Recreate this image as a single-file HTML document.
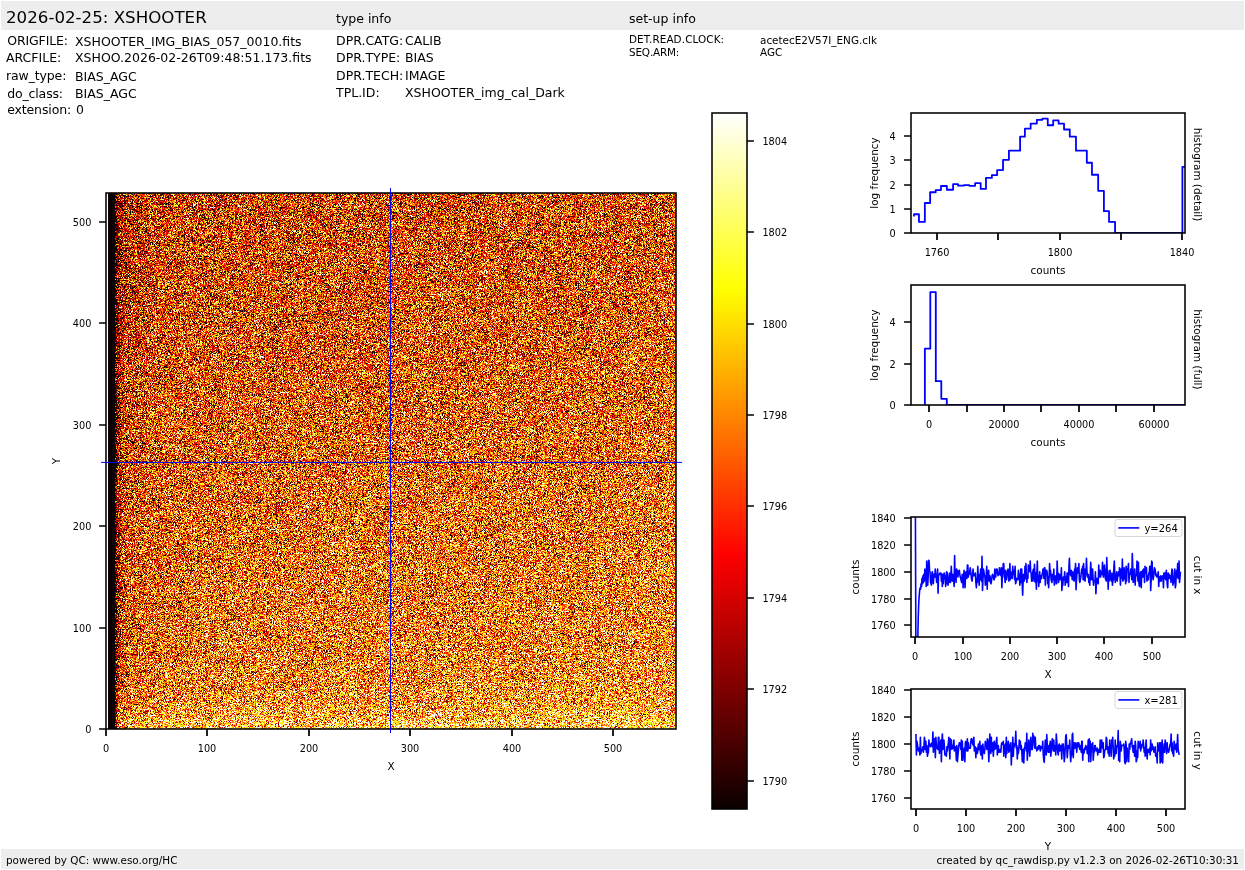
<!DOCTYPE html>
<html lang="en">
<head>
<meta charset="utf-8">
<title>2026-02-25: XSHOOTER</title>
<style>
html,body{margin:0;padding:0;background:#fff;}
body{width:1245px;height:870px;overflow:hidden;}
svg{display:block;font-family:"DejaVu Sans", "Liberation Sans", sans-serif;will-change:transform;}
text{white-space:pre;}
</style>
</head>
<body>
<svg width="1245" height="870" viewBox="0 0 1245 870">
<rect width="1245" height="870" fill="#fff"/>
<rect x="1" y="1" width="1243" height="29" fill="#ededed"/>
<rect x="1" y="849" width="1243" height="20" fill="#ededed"/>
<text x="6.00" y="23.00" font-size="16.67">2026-02-25: XSHOOTER</text>
<text x="336.00" y="23.00" font-size="12.50">type info</text>
<text x="629.00" y="23.00" font-size="12.50">set-up info</text>
<text x="7.20" y="45.00" font-size="12.50" textLength="60.85" lengthAdjust="spacing">ORIGFILE:</text>
<text x="75.00" y="46.00" font-size="12.50">XSHOOTER_IMG_BIAS_057_0010.fits</text>
<text x="6.00" y="62.00" font-size="12.50">ARCFILE:</text>
<text x="75.00" y="62.00" font-size="12.50">XSHOO.2026-02-26T09:48:51.173.fits</text>
<text x="6.00" y="80.00" font-size="12.50" textLength="60.41" lengthAdjust="spacing">raw_type:</text>
<text x="75.00" y="81.00" font-size="12.50">BIAS_AGC</text>
<text x="7.20" y="98.00" font-size="12.50" textLength="55.87" lengthAdjust="spacing">do_class:</text>
<text x="75.00" y="98.00" font-size="12.50">BIAS_AGC</text>
<text x="7.20" y="114.00" font-size="12.50" textLength="63.95" lengthAdjust="spacing">extension:</text>
<text x="76.10" y="114.00" font-size="12.50">0</text>
<text x="336.00" y="45.00" font-size="12.50">DPR.CATG:</text>
<text x="405.00" y="45.00" font-size="12.50">CALIB</text>
<text x="336.00" y="62.00" font-size="12.50">DPR.TYPE:</text>
<text x="405.00" y="62.00" font-size="12.50">BIAS</text>
<text x="336.00" y="80.00" font-size="12.50">DPR.TECH:</text>
<text x="405.00" y="80.00" font-size="12.50">IMAGE</text>
<text x="336.00" y="97.00" font-size="12.50">TPL.ID:</text>
<text x="405.00" y="97.00" font-size="12.50">XSHOOTER_img_cal_Dark</text>
<text x="629.00" y="43.00" font-size="10.42" textLength="95.14" lengthAdjust="spacing">DET.READ.CLOCK:</text>
<text x="760.00" y="44.00" font-size="10.42">acetecE2V57I_ENG.clk</text>
<text x="629.00" y="56.00" font-size="10.42" textLength="50.36" lengthAdjust="spacing">SEQ.ARM:</text>
<text x="760.00" y="56.00" font-size="10.42">AGC</text>
<text x="6.00" y="863.50" font-size="10.42">powered by QC: www.eso.org/HC</text>
<text x="1239.00" y="863.50" font-size="10.42" text-anchor="end">created by qc_rawdisp.py v1.2.3 on 2026-02-26T10:30:31</text>
<defs>
<clipPath id="ic"><rect x="106.0" y="193.0" width="570.0" height="536.0"/></clipPath>
<filter id="nz" filterUnits="userSpaceOnUse" x="6.0" y="93.0" width="770.0" height="736.0" color-interpolation-filters="sRGB">
<feTurbulence type="fractalNoise" baseFrequency="0.7" numOctaves="1" seed="3" result="t"/>
<feColorMatrix in="t" type="matrix" values="1 0 0 0 0 0 1 0 0 0 0 0 1 0 0 0 0 0 0 1" result="o"/>
<feDisplacementMap in="o" in2="o" scale="200" xChannelSelector="G" yChannelSelector="B" result="d"/>
<feColorMatrix in="d" type="matrix" values="1 0 0 0 0 1 0 0 0 0 1 0 0 0 0 0 0 0 0 1" result="g"/>
<feComposite in="g" in2="SourceGraphic" operator="arithmetic" k1="0" k2="1" k3="1" k4="-0.5" result="s"/>
<feComponentTransfer in="s">
<feFuncR type="discrete" tableValues=".042 .042 .042 .042 .042 .042 .042 .042 .042 .042 .042 .042 .042 .042 .042 .042 .042 .042 .042 .042 .042 .042 .042 .042 .042 .042 .042 .042 .042 .042 .042 .042 .042 .042 .042 .042 .042 .042 .042 .042 .042 .042 .042 .042 .042 .042 .042 .042 .042 .042 .042 .042 .042 .042 .042 .042 .042 .042 .042 .042 .042 .042 .042 .042 .042 .042 .042 .042 .042 .042 .042 .042 .042 .042 .042 .042 .042 .042 .042 .042 .042 .042 .147 .147 .147 .147 .147 .147 .147 .319 .319 .319 .319 .319 .319 .492 .492 .492 .492 .492 .492 .664 .664 .664 .664 .664 .664 .837 .837 .837 .837 .837 .837 1 1 1 1 1 1 1 1 1 1 1 1 1 1 1 1 1 1 1 1 1 1 1 1 1 1 1 1 1 1 1 1 1 1 1 1 1 1 1 1 1 1 1 1 1 1 1 1 1 1 1 1 1 1 1 1 1 1 1 1 1 1 1 1 1 1 1 1 1 1 1 1 1 1 1 1 1 1 1 1 1 1 1 1 1 1 1 1 1 1 1 1 1 1 1 1 1 1 1 1 1 1 1 1 1 1 1 1 1 1 1 1 1 1 1 1 1 1 1 1 1 1 1 1 1 1 1 1 1 1 1 1 1 1 1 1 1 1 1 1 1 1 1"/>
<feFuncG type="discrete" tableValues="0 0 0 0 0 0 0 0 0 0 0 0 0 0 0 0 0 0 0 0 0 0 0 0 0 0 0 0 0 0 0 0 0 0 0 0 0 0 0 0 0 0 0 0 0 0 0 0 0 0 0 0 0 0 0 0 0 0 0 0 0 0 0 0 0 0 0 0 0 0 0 0 0 0 0 0 0 0 0 0 0 0 0 0 0 0 0 0 0 0 0 0 0 0 0 0 0 0 0 0 0 0 0 0 0 0 0 0 0 0 0 0 0 .009 .009 .009 .009 .009 .009 .182 .182 .182 .182 .182 .182 .354 .354 .354 .354 .354 .354 .527 .527 .527 .527 .527 .527 .699 .699 .699 .699 .699 .699 .699 .872 .872 .872 .872 .872 .872 1 1 1 1 1 1 1 1 1 1 1 1 1 1 1 1 1 1 1 1 1 1 1 1 1 1 1 1 1 1 1 1 1 1 1 1 1 1 1 1 1 1 1 1 1 1 1 1 1 1 1 1 1 1 1 1 1 1 1 1 1 1 1 1 1 1 1 1 1 1 1 1 1 1 1 1 1 1 1 1 1 1 1 1 1 1 1 1 1 1 1 1 1 1 1 1 1 1 1 1 1 1 1 1 1 1"/>
<feFuncB type="discrete" tableValues="0 0 0 0 0 0 0 0 0 0 0 0 0 0 0 0 0 0 0 0 0 0 0 0 0 0 0 0 0 0 0 0 0 0 0 0 0 0 0 0 0 0 0 0 0 0 0 0 0 0 0 0 0 0 0 0 0 0 0 0 0 0 0 0 0 0 0 0 0 0 0 0 0 0 0 0 0 0 0 0 0 0 0 0 0 0 0 0 0 0 0 0 0 0 0 0 0 0 0 0 0 0 0 0 0 0 0 0 0 0 0 0 0 0 0 0 0 0 0 0 0 0 0 0 0 0 0 0 0 0 0 0 0 0 0 0 0 0 0 0 0 0 0 0 0 0 0 0 0 0 .066 .066 .066 .066 .066 .066 .325 .325 .325 .325 .325 .325 .583 .583 .583 .583 .583 .583 .842 .842 .842 .842 .842 .842 1 1 1 1 1 1 1 1 1 1 1 1 1 1 1 1 1 1 1 1 1 1 1 1 1 1 1 1 1 1 1 1 1 1 1 1 1 1 1 1 1 1 1 1 1 1 1 1 1 1 1 1 1 1 1 1 1 1 1 1 1 1 1 1 1 1 1 1 1 1 1 1 1 1 1 1 1 1 1 1 1 1"/>
<feFuncA type="linear" slope="0" intercept="1"/>
</feComponentTransfer>
</filter>
<linearGradient id="gp" gradientUnits="userSpaceOnUse" x1="289.1" y1="53.8" x2="492.9" y2="868.7">
<stop offset="0" stop-color="#737373"/><stop offset="1" stop-color="#8c8c8c"/>
</linearGradient>
<linearGradient id="gv" x1="0" y1="0" x2="0" y2="1">
<stop offset="0.0000" stop-color="#fff" stop-opacity="0.000"/>
<stop offset="0.8134" stop-color="#fff" stop-opacity="0.000"/>
<stop offset="0.8507" stop-color="#fff" stop-opacity="0.002"/>
<stop offset="0.8881" stop-color="#fff" stop-opacity="0.005"/>
<stop offset="0.9160" stop-color="#fff" stop-opacity="0.013"/>
<stop offset="0.9347" stop-color="#fff" stop-opacity="0.022"/>
<stop offset="0.9496" stop-color="#fff" stop-opacity="0.034"/>
<stop offset="0.9627" stop-color="#fff" stop-opacity="0.051"/>
<stop offset="0.9720" stop-color="#fff" stop-opacity="0.067"/>
<stop offset="0.9813" stop-color="#fff" stop-opacity="0.088"/>
<stop offset="0.9888" stop-color="#fff" stop-opacity="0.110"/>
<stop offset="0.9944" stop-color="#fff" stop-opacity="0.130"/>
<stop offset="1.0000" stop-color="#fff" stop-opacity="0.154"/>
</linearGradient>
<linearGradient id="gh" x1="0" y1="0" x2="1" y2="0">
<stop offset="0.0000" stop-color="#000" stop-opacity="1.000"/>
<stop offset="0.0147" stop-color="#000" stop-opacity="1.000"/>
<stop offset="0.0154" stop-color="#000" stop-opacity="0.432"/>
<stop offset="0.0175" stop-color="#000" stop-opacity="0.288"/>
<stop offset="0.0211" stop-color="#000" stop-opacity="0.168"/>
<stop offset="0.0263" stop-color="#000" stop-opacity="0.096"/>
<stop offset="0.0351" stop-color="#000" stop-opacity="0.048"/>
<stop offset="0.0702" stop-color="#000" stop-opacity="0.019"/>
<stop offset="0.1579" stop-color="#000" stop-opacity="0.000"/>
<stop offset="1.0000" stop-color="#000" stop-opacity="0.000"/>
</linearGradient>
<linearGradient id="cb" x1="0" y1="1" x2="0" y2="0">
<stop offset="0.00000" stop-color="rgb(11,0,0)"/>
<stop offset="0.36508" stop-color="rgb(255,0,0)"/>
<stop offset="0.74603" stop-color="rgb(255,255,0)"/>
<stop offset="1.00000" stop-color="rgb(255,255,255)"/>
</linearGradient>
</defs>
<g clip-path="url(#ic)"><g filter="url(#nz)"><rect x="106.0" y="193.0" width="570.0" height="536.0" fill="url(#gp)"/><rect x="106.0" y="193.0" width="570.0" height="536.0" fill="url(#gv)"/><rect x="106.0" y="193.0" width="570.0" height="536.0" fill="url(#gh)"/></g></g>
<rect x="106.0" y="193.0" width="2.15" height="536.0" fill="#fff"/>
<rect x="108.15" y="193.0" width="6.2" height="536.0" fill="#0b0000"/>
<rect x="106.00" y="193.00" width="570.00" height="536.00" fill="none" stroke="#000" stroke-width="1.55" stroke-linejoin="miter"/>
<path d="M106.00 729.00v6.94M207.00 729.00v6.94M309.00 729.00v6.94M410.00 729.00v6.94M512.00 729.00v6.94M613.00 729.00v6.94" stroke="#000" stroke-width="1.74" fill="none"/>
<text x="106.00" y="751.58" font-size="9.72" text-anchor="middle">0</text>
<text x="207.00" y="751.58" font-size="9.72" text-anchor="middle">100</text>
<text x="309.00" y="751.58" font-size="9.72" text-anchor="middle">200</text>
<text x="410.00" y="751.58" font-size="9.72" text-anchor="middle">300</text>
<text x="512.00" y="751.58" font-size="9.72" text-anchor="middle">400</text>
<text x="613.00" y="751.58" font-size="9.72" text-anchor="middle">500</text>
<path d="M106.00 729.00h-6.94M106.00 628.00h-6.94M106.00 526.00h-6.94M106.00 425.00h-6.94M106.00 323.00h-6.94M106.00 222.00h-6.94" stroke="#000" stroke-width="1.74" fill="none"/>
<text x="91.42" y="733.00" font-size="9.72" text-anchor="end">0</text>
<text x="91.42" y="632.00" font-size="9.72" text-anchor="end">100</text>
<text x="91.42" y="530.00" font-size="9.72" text-anchor="end">200</text>
<text x="91.42" y="429.00" font-size="9.72" text-anchor="end">300</text>
<text x="91.42" y="327.00" font-size="9.72" text-anchor="end">400</text>
<text x="91.42" y="226.00" font-size="9.72" text-anchor="end">500</text>
<text x="391.00" y="769.90" font-size="10.42" text-anchor="middle">X</text>
<text x="59.70" y="461.00" font-size="10.42" text-anchor="middle" transform="rotate(-90 59.70 461.00)">Y</text>
<path d="M101 462.4H682M390.5 188V733" stroke="#0000ff" stroke-width="1" fill="none"/>
<rect x="712.0" y="113.0" width="35.00" height="696.00" fill="url(#cb)"/>
<rect x="712.00" y="113.00" width="35.00" height="696.00" fill="none" stroke="#000" stroke-width="1.55" stroke-linejoin="miter"/>
<path d="M747.00 781.00h6.94M747.00 689.00h6.94M747.00 598.00h6.94M747.00 506.00h6.94M747.00 415.00h6.94M747.00 324.00h6.94M747.00 232.00h6.94M747.00 141.00h6.94" stroke="#000" stroke-width="1.74" fill="none"/>
<text x="762.38" y="785.00" font-size="9.72">1790</text>
<text x="762.38" y="693.00" font-size="9.72">1792</text>
<text x="762.38" y="602.00" font-size="9.72">1794</text>
<text x="762.38" y="510.00" font-size="9.72">1796</text>
<text x="762.38" y="419.00" font-size="9.72">1798</text>
<text x="762.38" y="328.00" font-size="9.72">1800</text>
<text x="762.38" y="236.00" font-size="9.72">1802</text>
<text x="762.38" y="145.00" font-size="9.72">1804</text>
<clipPath id="c1"><rect x="911.0" y="113.0" width="274.00" height="120.00"/></clipPath>
<path d="M914.00 216.61V214.26H918.96V221.91H924.85V203.02H930.13V192.25H935.71V190.06H940.99V186.01H946.88V189.75H953.08V184.13H958.05V185.69H963.94V185.07H969.37V185.85H975.11V183.04H980.69V188.97H985.97V177.89H991.86V175.08H997.14V170.08H1003.03V159.78H1008.92V150.72H1020.09V136.67H1024.90V128.71H1030.64V123.71H1036.84V119.81H1042.27V118.71H1047.76V125.27H1053.18V120.43H1058.61V123.71H1064.04V129.49H1069.78V136.67H1075.99V150.72H1086.84V162.74H1091.96V174.76H1098.17V190.85H1103.91V211.14H1109.02V221.91H1115.07V233.00H1182.39V166.96H1185.80" stroke="#0000ff" stroke-width="1.8" fill="none" stroke-linejoin="round" clip-path="url(#c1)"/>
<rect x="911.00" y="113.00" width="274.00" height="120.00" fill="none" stroke="#000" stroke-width="1.55" stroke-linejoin="miter"/>
<path d="M937.00 233.00v6.94M998.00 233.00v6.94M1060.00 233.00v6.94M1121.00 233.00v6.94M1182.00 233.00v6.94" stroke="#000" stroke-width="1.74" fill="none"/>
<text x="937.00" y="255.58" font-size="9.72" text-anchor="middle">1760</text>
<text x="1060.00" y="255.58" font-size="9.72" text-anchor="middle">1800</text>
<text x="1182.00" y="255.58" font-size="9.72" text-anchor="middle">1840</text>
<path d="M911.00 233.00h-6.94M911.00 209.00h-6.94M911.00 185.00h-6.94M911.00 160.00h-6.94M911.00 136.00h-6.94" stroke="#000" stroke-width="1.74" fill="none"/>
<text x="895.70" y="237.00" font-size="9.72" text-anchor="end">0</text>
<text x="895.70" y="213.00" font-size="9.72" text-anchor="end">1</text>
<text x="895.70" y="189.00" font-size="9.72" text-anchor="end">2</text>
<text x="895.70" y="164.00" font-size="9.72" text-anchor="end">3</text>
<text x="895.70" y="140.00" font-size="9.72" text-anchor="end">4</text>
<text x="1048.00" y="273.90" font-size="10.42" text-anchor="middle">counts</text>
<text x="877.70" y="173.00" font-size="10.42" text-anchor="middle" transform="rotate(-90 877.70 173.00)">log frequency</text>
<text x="1194.00" y="174.50" font-size="10.42" text-anchor="middle" transform="rotate(90 1194.00 174.50)">histogram (detail)</text>
<clipPath id="c2"><rect x="911.0" y="285.0" width="274.00" height="120.00"/></clipPath>
<path d="M924.87 405.00V348.70H930.30V292.19H935.80V381.19H941.30V398.79H946.80V405.00H1185.0" stroke="#0000ff" stroke-width="1.8" fill="none" stroke-linejoin="round" clip-path="url(#c2)"/>
<rect x="911.00" y="285.00" width="274.00" height="120.00" fill="none" stroke="#000" stroke-width="1.55" stroke-linejoin="miter"/>
<path d="M929.00 405.00v6.94M967.00 405.00v6.94M1004.00 405.00v6.94M1041.00 405.00v6.94M1079.00 405.00v6.94M1116.00 405.00v6.94M1154.00 405.00v6.94" stroke="#000" stroke-width="1.74" fill="none"/>
<text x="929.00" y="427.58" font-size="9.72" text-anchor="middle">0</text>
<text x="1004.00" y="427.58" font-size="9.72" text-anchor="middle">20000</text>
<text x="1079.00" y="427.58" font-size="9.72" text-anchor="middle">40000</text>
<text x="1154.00" y="427.58" font-size="9.72" text-anchor="middle">60000</text>
<path d="M911.00 405.00h-6.94M911.00 364.00h-6.94M911.00 322.00h-6.94" stroke="#000" stroke-width="1.74" fill="none"/>
<text x="895.70" y="409.00" font-size="9.72" text-anchor="end">0</text>
<text x="895.70" y="368.00" font-size="9.72" text-anchor="end">2</text>
<text x="895.70" y="326.00" font-size="9.72" text-anchor="end">4</text>
<text x="1048.00" y="445.90" font-size="10.42" text-anchor="middle">counts</text>
<text x="877.70" y="345.00" font-size="10.42" text-anchor="middle" transform="rotate(-90 877.70 345.00)">log frequency</text>
<text x="1194.00" y="349.40" font-size="10.42" text-anchor="middle" transform="rotate(90 1194.00 349.40)">histogram (full)</text>
<clipPath id="c3"><rect x="911.0" y="517.0" width="274.00" height="120.00"/></clipPath>
<path d="M915.40 512.00L915.87 642.00L916.35 642.00L916.82 642.00L917.29 642.00L917.76 641.38L918.24 617.26L918.71 603.86L919.18 595.82L919.65 590.46L920.12 587.78L920.60 589.12L921.07 583.76L921.54 586.44L922.01 578.40L922.49 583.76L922.96 575.72L923.43 582.42L923.90 574.38L924.38 581.08L924.85 569.02L925.32 578.40L925.79 571.70L926.27 586.44L926.74 560.98L927.21 574.38L927.68 585.10L928.16 577.06L928.63 560.31L929.10 560.98L929.57 571.70L930.05 571.70L930.52 582.42L930.99 583.76L931.46 585.10L931.94 573.04L932.41 571.70L932.88 579.74L933.36 583.76L933.83 574.38L934.30 574.38L934.77 577.06L935.25 569.02L935.72 577.06L936.19 577.06L936.66 582.42L937.13 575.72L937.61 569.02L938.08 593.14L938.55 575.72L939.02 574.38L939.50 574.38L939.97 573.04L940.44 573.04L940.91 573.04L941.39 581.08L941.86 574.38L942.33 586.44L942.80 574.38L943.28 583.76L943.75 577.06L944.22 573.04L944.69 578.40L945.17 575.72L945.64 586.44L946.11 581.08L946.58 571.70L947.06 583.76L947.53 573.04L948.00 585.10L948.48 581.08L948.95 582.42L949.42 575.72L949.89 573.04L950.37 582.42L950.84 577.06L951.31 566.34L951.78 578.40L952.25 581.08L952.73 574.38L953.20 577.06L953.67 581.08L954.14 586.44L954.62 555.62L955.09 579.74L955.56 575.72L956.03 582.42L956.51 569.02L956.98 571.70L957.45 570.36L957.92 577.06L958.40 573.04L958.87 571.70L959.34 570.36L959.81 574.38L960.29 577.06L960.76 578.40L961.23 581.08L961.70 582.42L962.18 574.38L962.65 577.06L963.12 587.78L963.60 577.06L964.07 570.36L964.54 578.40L965.01 587.78L965.49 577.06L965.96 571.70L966.43 575.72L966.90 578.40L967.38 565.00L967.85 565.00L968.32 577.06L968.79 571.70L969.26 574.38L969.74 571.70L970.21 567.68L970.68 571.70L971.15 575.72L971.63 579.74L972.10 581.08L972.57 575.72L973.04 569.02L973.52 574.38L973.99 575.72L974.46 574.38L974.93 575.72L975.41 573.04L975.88 582.42L976.35 587.78L976.82 578.40L977.30 582.42L977.77 566.34L978.24 577.06L978.71 577.06L979.19 585.10L979.66 574.38L980.13 579.74L980.61 569.02L981.08 571.70L981.55 581.08L982.02 556.29L982.50 590.46L982.97 579.74L983.44 569.02L983.91 571.70L984.38 575.72L984.86 575.72L985.33 585.10L985.80 583.76L986.27 574.38L986.75 566.34L987.22 589.12L987.69 573.04L988.16 573.04L988.64 570.36L989.11 581.08L989.58 579.74L990.05 575.72L990.53 582.42L991.00 583.76L991.47 581.08L991.94 577.06L992.42 574.38L992.89 575.72L993.36 575.72L993.84 579.74L994.31 579.74L994.78 569.02L995.25 575.72L995.73 577.06L996.20 570.36L996.67 569.02L997.14 569.02L997.62 573.04L998.09 575.72L998.56 574.38L999.03 574.38L999.50 567.68L999.98 574.38L1000.45 571.70L1000.92 575.72L1001.39 567.68L1001.87 587.78L1002.34 574.38L1002.81 571.70L1003.28 563.66L1003.76 563.66L1004.23 577.06L1004.70 577.06L1005.17 582.42L1005.65 570.36L1006.12 574.38L1006.59 579.74L1007.06 574.38L1007.54 571.70L1008.01 569.02L1008.48 574.38L1008.95 581.08L1009.43 579.74L1009.90 563.66L1010.37 579.74L1010.85 571.70L1011.32 573.04L1011.79 577.06L1012.26 578.40L1012.74 566.34L1013.21 574.38L1013.68 570.36L1014.15 573.04L1014.62 579.74L1015.10 566.34L1015.57 583.76L1016.04 582.42L1016.51 578.40L1016.99 579.74L1017.46 579.74L1017.93 579.74L1018.40 570.36L1018.88 575.72L1019.35 574.38L1019.82 585.10L1020.29 581.08L1020.77 569.02L1021.24 582.42L1021.71 569.02L1022.18 582.42L1022.66 595.15L1023.13 581.08L1023.60 574.38L1024.08 581.08L1024.55 577.06L1025.02 566.34L1025.49 578.40L1025.96 563.66L1026.44 578.40L1026.91 582.42L1027.38 575.72L1027.86 578.40L1028.33 565.00L1028.80 570.36L1029.27 569.02L1029.74 571.70L1030.22 560.98L1030.69 571.70L1031.16 573.04L1031.63 581.08L1032.11 581.08L1032.58 574.38L1033.05 570.36L1033.53 569.02L1034.00 581.08L1034.47 564.33L1034.94 574.38L1035.41 582.42L1035.89 573.04L1036.36 589.12L1036.83 574.38L1037.31 560.98L1037.78 581.08L1038.25 575.72L1038.72 586.44L1039.19 579.74L1039.67 571.70L1040.14 582.42L1040.61 575.72L1041.09 578.40L1041.56 578.40L1042.03 574.38L1042.50 573.04L1042.97 569.02L1043.45 570.36L1043.92 578.40L1044.39 567.68L1044.87 567.68L1045.34 585.10L1045.81 571.70L1046.28 570.36L1046.75 570.36L1047.23 573.04L1047.70 583.76L1048.17 577.06L1048.64 587.78L1049.12 577.06L1049.59 563.66L1050.06 571.70L1050.53 570.36L1051.01 578.40L1051.48 581.08L1051.95 582.42L1052.42 574.38L1052.90 579.74L1053.37 579.74L1053.84 569.02L1054.32 585.10L1054.79 583.76L1055.26 578.40L1055.73 575.72L1056.20 575.72L1056.68 583.76L1057.15 560.98L1057.62 575.72L1058.10 573.04L1058.57 582.42L1059.04 574.38L1059.51 574.38L1059.98 579.74L1060.46 577.06L1060.93 578.40L1061.40 567.68L1061.88 590.46L1062.35 583.76L1062.82 585.10L1063.29 577.06L1063.76 579.74L1064.24 578.40L1064.71 571.70L1065.18 585.10L1065.65 581.08L1066.13 577.06L1066.60 582.42L1067.07 573.04L1067.55 573.04L1068.02 579.74L1068.49 586.44L1068.96 566.34L1069.43 558.30L1069.91 573.04L1070.38 574.38L1070.85 575.72L1071.33 570.36L1071.80 575.72L1072.27 579.74L1072.74 571.70L1073.21 575.72L1073.69 579.74L1074.16 581.08L1074.63 569.02L1075.11 571.70L1075.58 563.66L1076.05 589.79L1076.52 579.74L1076.99 573.04L1077.47 567.68L1077.94 571.70L1078.41 573.04L1078.88 563.66L1079.36 579.74L1079.83 582.42L1080.30 579.74L1080.78 577.06L1081.25 573.04L1081.72 569.02L1082.19 573.04L1082.66 566.34L1083.14 579.74L1083.61 563.66L1084.08 579.74L1084.56 569.02L1085.03 581.08L1085.50 573.04L1085.97 574.38L1086.44 558.30L1086.92 570.36L1087.39 577.06L1087.86 575.72L1088.34 574.38L1088.81 582.42L1089.28 579.74L1089.75 585.10L1090.22 575.72L1090.70 562.32L1091.17 570.36L1091.64 579.74L1092.12 579.74L1092.59 569.02L1093.06 578.40L1093.53 585.10L1094.00 581.08L1094.48 581.08L1094.95 581.08L1095.42 571.70L1095.89 593.81L1096.37 583.76L1096.84 578.40L1097.31 582.42L1097.78 582.42L1098.26 583.76L1098.73 565.00L1099.20 577.06L1099.67 571.70L1100.15 570.36L1100.62 577.06L1101.09 571.70L1101.57 571.70L1102.04 574.38L1102.51 562.32L1102.98 573.04L1103.45 577.06L1103.93 571.70L1104.40 565.00L1104.87 569.02L1105.35 578.40L1105.82 579.74L1106.29 581.08L1106.76 557.63L1107.23 573.04L1107.71 570.36L1108.18 589.12L1108.65 575.72L1109.12 581.08L1109.60 571.70L1110.07 570.36L1110.54 579.74L1111.01 578.40L1111.49 581.08L1111.96 573.04L1112.43 585.10L1112.90 581.08L1113.38 579.74L1113.85 567.68L1114.32 560.98L1114.80 574.38L1115.27 582.42L1115.74 574.38L1116.21 579.74L1116.68 571.70L1117.16 581.08L1117.63 577.06L1118.10 575.72L1118.58 571.70L1119.05 575.72L1119.52 567.68L1119.99 574.38L1120.46 585.10L1120.94 569.02L1121.41 577.06L1121.88 578.40L1122.36 558.97L1122.83 581.08L1123.30 574.38L1123.77 579.74L1124.24 567.68L1124.72 577.06L1125.19 573.04L1125.66 583.76L1126.13 566.34L1126.61 581.08L1127.08 569.02L1127.55 569.02L1128.03 567.68L1128.50 563.66L1128.97 582.42L1129.44 573.04L1129.91 574.38L1130.39 573.04L1130.86 569.02L1131.33 574.38L1131.81 579.74L1132.28 553.61L1132.75 566.34L1133.22 582.42L1133.69 574.38L1134.17 581.08L1134.64 569.02L1135.11 585.10L1135.59 577.06L1136.06 575.72L1136.53 574.38L1137.00 560.98L1137.47 566.34L1137.95 581.08L1138.42 562.32L1138.89 582.42L1139.37 586.44L1139.84 583.76L1140.31 573.04L1140.78 571.70L1141.25 587.78L1141.73 571.70L1142.20 577.06L1142.67 570.36L1143.14 577.06L1143.62 569.02L1144.09 571.70L1144.56 582.42L1145.03 566.34L1145.51 573.04L1145.98 570.36L1146.45 567.68L1146.92 581.08L1147.40 575.72L1147.87 579.74L1148.34 579.74L1148.82 573.04L1149.29 573.04L1149.76 566.34L1150.23 566.34L1150.70 590.46L1151.18 579.74L1151.65 560.98L1152.12 562.32L1152.60 575.72L1153.07 579.74L1153.54 577.06L1154.01 573.04L1154.48 567.68L1154.96 569.02L1155.43 571.70L1155.90 575.72L1156.38 574.38L1156.85 577.06L1157.32 574.38L1157.79 575.72L1158.26 571.70L1158.74 586.44L1159.21 577.06L1159.68 577.06L1160.15 581.08L1160.63 575.72L1161.10 581.08L1161.57 578.40L1162.05 577.06L1162.52 575.72L1162.99 578.40L1163.46 587.78L1163.93 573.04L1164.41 573.04L1164.88 573.04L1165.35 578.40L1165.83 579.74L1166.30 570.36L1166.77 577.06L1167.24 585.10L1167.71 587.78L1168.19 573.04L1168.66 578.40L1169.13 574.38L1169.61 578.40L1170.08 577.06L1170.55 575.72L1171.02 582.42L1171.49 574.38L1171.97 569.02L1172.44 570.36L1172.91 585.10L1173.38 582.42L1173.86 582.42L1174.33 575.72L1174.80 569.02L1175.28 587.78L1175.75 585.10L1176.22 574.38L1176.69 570.36L1177.16 577.06L1177.64 563.66L1178.11 578.40L1178.58 567.68L1179.05 560.98L1179.53 582.42L1180.00 577.06L1180.47 571.70" stroke="#0000ff" stroke-width="1.6" fill="none" stroke-linejoin="round" clip-path="url(#c3)"/>
<rect x="911.00" y="517.00" width="274.00" height="120.00" fill="none" stroke="#000" stroke-width="1.55" stroke-linejoin="miter"/>
<path d="M915.00 637.00v6.94M963.00 637.00v6.94M1010.00 637.00v6.94M1057.00 637.00v6.94M1104.00 637.00v6.94M1152.00 637.00v6.94" stroke="#000" stroke-width="1.74" fill="none"/>
<text x="915.00" y="659.58" font-size="9.72" text-anchor="middle">0</text>
<text x="963.00" y="659.58" font-size="9.72" text-anchor="middle">100</text>
<text x="1010.00" y="659.58" font-size="9.72" text-anchor="middle">200</text>
<text x="1057.00" y="659.58" font-size="9.72" text-anchor="middle">300</text>
<text x="1104.00" y="659.58" font-size="9.72" text-anchor="middle">400</text>
<text x="1152.00" y="659.58" font-size="9.72" text-anchor="middle">500</text>
<path d="M911.00 625.00h-6.94M911.00 599.00h-6.94M911.00 572.00h-6.94M911.00 545.00h-6.94M911.00 518.00h-6.94" stroke="#000" stroke-width="1.74" fill="none"/>
<text x="895.70" y="629.00" font-size="9.72" text-anchor="end">1760</text>
<text x="895.70" y="603.00" font-size="9.72" text-anchor="end">1780</text>
<text x="895.70" y="576.00" font-size="9.72" text-anchor="end">1800</text>
<text x="895.70" y="549.00" font-size="9.72" text-anchor="end">1820</text>
<text x="895.70" y="522.00" font-size="9.72" text-anchor="end">1840</text>
<text x="1048.00" y="677.90" font-size="10.42" text-anchor="middle">X</text>
<text x="859.00" y="577.00" font-size="10.42" text-anchor="middle" transform="rotate(-90 859.00 577.00)">counts</text>
<text x="1194.00" y="575.20" font-size="10.42" text-anchor="middle" transform="rotate(90 1194.00 575.20)">cut in x</text>
<rect x="1115.0" y="519.50" width="66.9" height="17" rx="2.2" ry="2.2" fill="#fff" fill-opacity="0.8" stroke="#ccc" stroke-opacity="0.8" stroke-width="1"/>
<path d="M1118.3 527.90h21" stroke="#0000ff" stroke-width="1.6" fill="none"/>
<text x="1144.40" y="531.60" font-size="10.00">y=264</text>
<clipPath id="c4"><rect x="911.0" y="689.0" width="274.00" height="120.00"/></clipPath>
<path d="M915.90 733.98L916.40 754.90L916.90 741.40L917.40 744.10L917.90 748.15L918.40 750.85L918.90 749.50L919.40 748.15L919.90 754.90L920.40 737.35L920.89 753.55L921.39 749.50L921.89 750.85L922.39 749.50L922.89 746.80L923.39 752.20L923.89 748.15L924.39 737.35L924.89 741.40L925.39 749.50L925.89 741.40L926.39 752.20L926.89 745.45L927.39 756.25L927.89 753.55L928.39 752.20L928.89 740.05L929.39 745.45L929.89 744.10L930.39 746.80L930.88 745.45L931.38 744.10L931.88 742.75L932.38 746.80L932.88 731.95L933.38 752.20L933.88 740.05L934.38 738.70L934.88 744.10L935.38 757.60L935.88 737.35L936.38 745.45L936.88 748.15L937.38 746.80L937.88 749.50L938.38 737.35L938.88 737.35L939.38 753.55L939.88 748.15L940.38 745.45L940.88 740.05L941.37 761.65L941.87 741.40L942.37 733.98L942.87 749.50L943.37 748.15L943.87 740.05L944.37 745.45L944.87 754.90L945.37 754.90L945.87 753.55L946.37 756.25L946.87 746.80L947.37 750.85L947.87 746.80L948.37 742.75L948.87 737.35L949.37 746.80L949.87 758.95L950.37 738.70L950.87 748.15L951.36 740.05L951.86 749.50L952.36 745.45L952.86 748.15L953.36 748.15L953.86 740.05L954.36 750.85L954.86 746.80L955.36 746.80L955.86 749.50L956.36 760.30L956.86 745.45L957.36 761.65L957.86 756.25L958.36 750.85L958.86 745.45L959.36 742.75L959.86 742.75L960.36 744.10L960.86 749.50L961.35 740.05L961.85 760.30L962.35 741.40L962.85 760.30L963.35 753.55L963.85 750.85L964.35 748.15L964.85 761.65L965.35 742.75L965.85 741.40L966.35 742.75L966.85 750.85L967.35 738.70L967.85 750.85L968.35 742.75L968.85 748.15L969.35 748.15L969.85 748.15L970.35 748.15L970.85 741.40L971.34 738.70L971.84 738.70L972.34 742.75L972.84 744.10L973.34 745.45L973.84 737.35L974.34 750.85L974.84 750.85L975.34 746.80L975.84 757.60L976.34 749.50L976.84 748.15L977.34 753.55L977.84 750.85L978.34 744.10L978.84 749.50L979.34 746.80L979.84 741.40L980.34 750.85L980.84 754.90L981.33 748.15L981.83 745.45L982.33 758.95L982.83 744.10L983.33 749.50L983.83 750.85L984.33 753.55L984.83 749.50L985.33 741.40L985.83 744.10L986.33 742.75L986.83 749.50L987.33 738.70L987.83 740.05L988.33 748.15L988.83 761.65L989.33 746.80L989.83 733.98L990.33 748.15L990.82 753.55L991.32 737.35L991.82 750.85L992.32 745.45L992.82 742.75L993.32 756.25L993.82 746.80L994.32 741.40L994.82 749.50L995.32 744.10L995.82 748.15L996.32 741.40L996.82 737.35L997.32 754.90L997.82 749.50L998.32 745.45L998.82 752.20L999.32 752.20L999.82 749.50L1000.32 749.50L1000.81 752.20L1001.31 745.45L1001.81 742.75L1002.31 744.10L1002.81 744.10L1003.31 741.40L1003.81 756.25L1004.31 748.15L1004.81 746.80L1005.31 744.10L1005.81 757.60L1006.31 737.35L1006.81 753.55L1007.31 746.80L1007.81 744.10L1008.31 741.40L1008.81 752.20L1009.31 750.85L1009.81 745.45L1010.31 744.10L1010.80 742.75L1011.30 765.03L1011.80 752.20L1012.30 756.25L1012.80 737.35L1013.30 756.25L1013.80 744.10L1014.30 746.80L1014.80 744.10L1015.30 742.75L1015.80 731.27L1016.30 748.15L1016.80 745.45L1017.30 758.95L1017.80 748.15L1018.30 753.55L1018.80 749.50L1019.30 740.05L1019.80 746.80L1020.30 741.40L1020.79 749.50L1021.29 745.45L1021.79 750.85L1022.29 761.65L1022.79 752.20L1023.29 749.50L1023.79 763.00L1024.29 748.15L1024.79 748.15L1025.29 742.75L1025.79 744.10L1026.29 750.85L1026.79 733.30L1027.29 760.30L1027.79 749.50L1028.29 749.50L1028.79 740.05L1029.29 750.85L1029.79 756.25L1030.29 746.80L1030.79 737.35L1031.28 749.50L1031.78 748.15L1032.28 749.50L1032.78 733.30L1033.28 740.05L1033.78 736.00L1034.28 745.45L1034.78 748.15L1035.28 737.35L1035.78 748.15L1036.28 748.15L1036.78 750.85L1037.28 749.50L1037.78 746.80L1038.28 749.50L1038.78 745.45L1039.28 748.15L1039.78 745.45L1040.28 750.85L1040.78 749.50L1041.27 746.80L1041.77 748.15L1042.27 748.15L1042.77 741.40L1043.27 754.90L1043.77 760.30L1044.27 762.33L1044.77 749.50L1045.27 740.05L1045.77 748.15L1046.27 754.90L1046.77 734.65L1047.27 745.45L1047.77 750.85L1048.27 752.20L1048.77 745.45L1049.27 752.20L1049.77 745.45L1050.27 741.40L1050.76 756.25L1051.26 750.85L1051.76 745.45L1052.26 738.70L1052.76 742.75L1053.26 750.85L1053.76 740.05L1054.26 750.85L1054.76 749.50L1055.26 745.45L1055.76 754.90L1056.26 733.98L1056.76 741.40L1057.26 746.80L1057.76 752.20L1058.26 754.90L1058.76 745.45L1059.26 744.10L1059.76 750.85L1060.26 749.50L1060.75 745.45L1061.25 748.15L1061.75 758.95L1062.25 744.10L1062.75 746.80L1063.25 744.10L1063.75 752.20L1064.25 761.65L1064.75 756.25L1065.25 746.80L1065.75 736.00L1066.25 734.65L1066.75 746.80L1067.25 757.60L1067.75 750.85L1068.25 745.45L1068.75 745.45L1069.25 748.15L1069.75 740.05L1070.25 753.55L1070.74 761.65L1071.24 753.55L1071.74 754.90L1072.24 734.65L1072.74 733.30L1073.24 757.60L1073.74 745.45L1074.24 742.75L1074.74 748.15L1075.24 746.80L1075.74 742.75L1076.24 745.45L1076.74 752.20L1077.24 745.45L1077.74 742.75L1078.24 746.80L1078.74 742.75L1079.24 745.45L1079.74 749.50L1080.24 749.50L1080.73 745.45L1081.23 752.20L1081.73 741.40L1082.23 741.40L1082.73 760.30L1083.23 749.50L1083.73 753.55L1084.23 752.20L1084.73 748.15L1085.23 749.50L1085.73 745.45L1086.23 746.80L1086.73 746.80L1087.23 753.55L1087.73 750.85L1088.23 740.05L1088.73 761.65L1089.23 738.70L1089.73 752.20L1090.23 741.40L1090.72 761.65L1091.22 750.85L1091.72 744.10L1092.22 748.15L1092.72 742.75L1093.22 760.30L1093.72 752.20L1094.22 752.20L1094.72 745.45L1095.22 745.45L1095.72 749.50L1096.22 750.85L1096.72 750.85L1097.22 748.15L1097.72 754.90L1098.22 749.50L1098.72 749.50L1099.22 752.20L1099.72 752.20L1100.22 740.05L1100.71 752.20L1101.21 746.80L1101.71 740.05L1102.21 744.10L1102.71 748.15L1103.21 742.75L1103.71 757.60L1104.21 756.25L1104.71 750.85L1105.21 749.50L1105.71 749.50L1106.21 737.35L1106.71 738.70L1107.21 749.50L1107.71 746.80L1108.21 753.55L1108.71 746.80L1109.21 756.25L1109.71 740.05L1110.21 752.20L1110.70 745.45L1111.20 756.25L1111.70 740.05L1112.20 745.45L1112.70 737.35L1113.20 748.15L1113.70 758.95L1114.20 753.55L1114.70 756.25L1115.20 740.05L1115.70 752.20L1116.20 753.55L1116.70 745.45L1117.20 746.80L1117.70 745.45L1118.20 730.60L1118.70 760.30L1119.20 757.60L1119.70 761.65L1120.20 741.40L1120.69 744.10L1121.19 750.85L1121.69 745.45L1122.19 745.45L1122.69 745.45L1123.19 745.45L1123.69 744.10L1124.19 748.15L1124.69 761.65L1125.19 763.68L1125.69 741.40L1126.19 745.45L1126.69 761.65L1127.19 748.15L1127.69 754.90L1128.19 752.20L1128.69 761.65L1129.19 744.10L1129.69 749.50L1130.19 744.10L1130.68 742.75L1131.18 741.40L1131.68 738.70L1132.18 746.80L1132.68 748.15L1133.18 752.20L1133.68 745.45L1134.18 750.85L1134.68 756.25L1135.18 741.40L1135.68 745.45L1136.18 761.65L1136.68 760.30L1137.18 750.85L1137.68 757.60L1138.18 741.40L1138.68 748.15L1139.18 745.45L1139.68 744.10L1140.18 741.40L1140.67 750.85L1141.17 745.45L1141.67 748.15L1142.17 744.10L1142.67 745.45L1143.17 740.05L1143.67 745.45L1144.17 752.20L1144.67 748.15L1145.17 756.25L1145.67 746.80L1146.17 740.05L1146.67 752.20L1147.17 758.95L1147.67 749.50L1148.17 752.20L1148.67 749.50L1149.17 752.20L1149.67 748.15L1150.17 754.90L1150.66 740.05L1151.16 750.85L1151.66 745.45L1152.16 744.10L1152.66 749.50L1153.16 746.80L1153.66 750.85L1154.16 752.20L1154.66 750.85L1155.16 746.80L1155.66 756.25L1156.16 754.90L1156.66 753.55L1157.16 763.00L1157.66 742.75L1158.16 749.50L1158.66 750.85L1159.16 748.15L1159.66 742.75L1160.16 763.00L1160.65 742.75L1161.15 761.65L1161.65 754.90L1162.15 740.05L1162.65 763.00L1163.15 748.15L1163.65 752.20L1164.15 744.10L1164.65 752.20L1165.15 740.05L1165.65 742.75L1166.15 744.10L1166.65 753.55L1167.15 742.75L1167.65 750.85L1168.15 750.85L1168.65 752.20L1169.15 749.50L1169.65 746.80L1170.15 744.10L1170.64 744.10L1171.14 733.98L1171.64 750.85L1172.14 742.75L1172.64 753.55L1173.14 750.85L1173.64 756.25L1174.14 741.40L1174.64 748.15L1175.14 748.15L1175.64 749.50L1176.14 744.10L1176.64 752.20L1177.14 746.80L1177.64 734.65L1178.14 749.50L1178.64 752.20L1179.14 754.90" stroke="#0000ff" stroke-width="1.6" fill="none" stroke-linejoin="round" clip-path="url(#c4)"/>
<rect x="911.00" y="689.00" width="274.00" height="120.00" fill="none" stroke="#000" stroke-width="1.55" stroke-linejoin="miter"/>
<path d="M916.00 809.00v6.94M966.00 809.00v6.94M1016.00 809.00v6.94M1066.00 809.00v6.94M1116.00 809.00v6.94M1166.00 809.00v6.94" stroke="#000" stroke-width="1.74" fill="none"/>
<text x="916.00" y="831.58" font-size="9.72" text-anchor="middle">0</text>
<text x="966.00" y="831.58" font-size="9.72" text-anchor="middle">100</text>
<text x="1016.00" y="831.58" font-size="9.72" text-anchor="middle">200</text>
<text x="1066.00" y="831.58" font-size="9.72" text-anchor="middle">300</text>
<text x="1116.00" y="831.58" font-size="9.72" text-anchor="middle">400</text>
<text x="1166.00" y="831.58" font-size="9.72" text-anchor="middle">500</text>
<path d="M911.00 798.00h-6.94M911.00 771.00h-6.94M911.00 744.00h-6.94M911.00 717.00h-6.94M911.00 690.00h-6.94" stroke="#000" stroke-width="1.74" fill="none"/>
<text x="895.70" y="802.00" font-size="9.72" text-anchor="end">1760</text>
<text x="895.70" y="775.00" font-size="9.72" text-anchor="end">1780</text>
<text x="895.70" y="748.00" font-size="9.72" text-anchor="end">1800</text>
<text x="895.70" y="721.00" font-size="9.72" text-anchor="end">1820</text>
<text x="895.70" y="694.00" font-size="9.72" text-anchor="end">1840</text>
<text x="1048.00" y="849.90" font-size="10.42" text-anchor="middle">Y</text>
<text x="859.00" y="749.00" font-size="10.42" text-anchor="middle" transform="rotate(-90 859.00 749.00)">counts</text>
<text x="1194.00" y="750.50" font-size="10.42" text-anchor="middle" transform="rotate(90 1194.00 750.50)">cut in y</text>
<rect x="1115.0" y="691.50" width="66.9" height="17" rx="2.2" ry="2.2" fill="#fff" fill-opacity="0.8" stroke="#ccc" stroke-opacity="0.8" stroke-width="1"/>
<path d="M1118.3 699.90h21" stroke="#0000ff" stroke-width="1.6" fill="none"/>
<text x="1144.40" y="703.60" font-size="10.00">x=281</text>
</svg>
</body>
</html>
